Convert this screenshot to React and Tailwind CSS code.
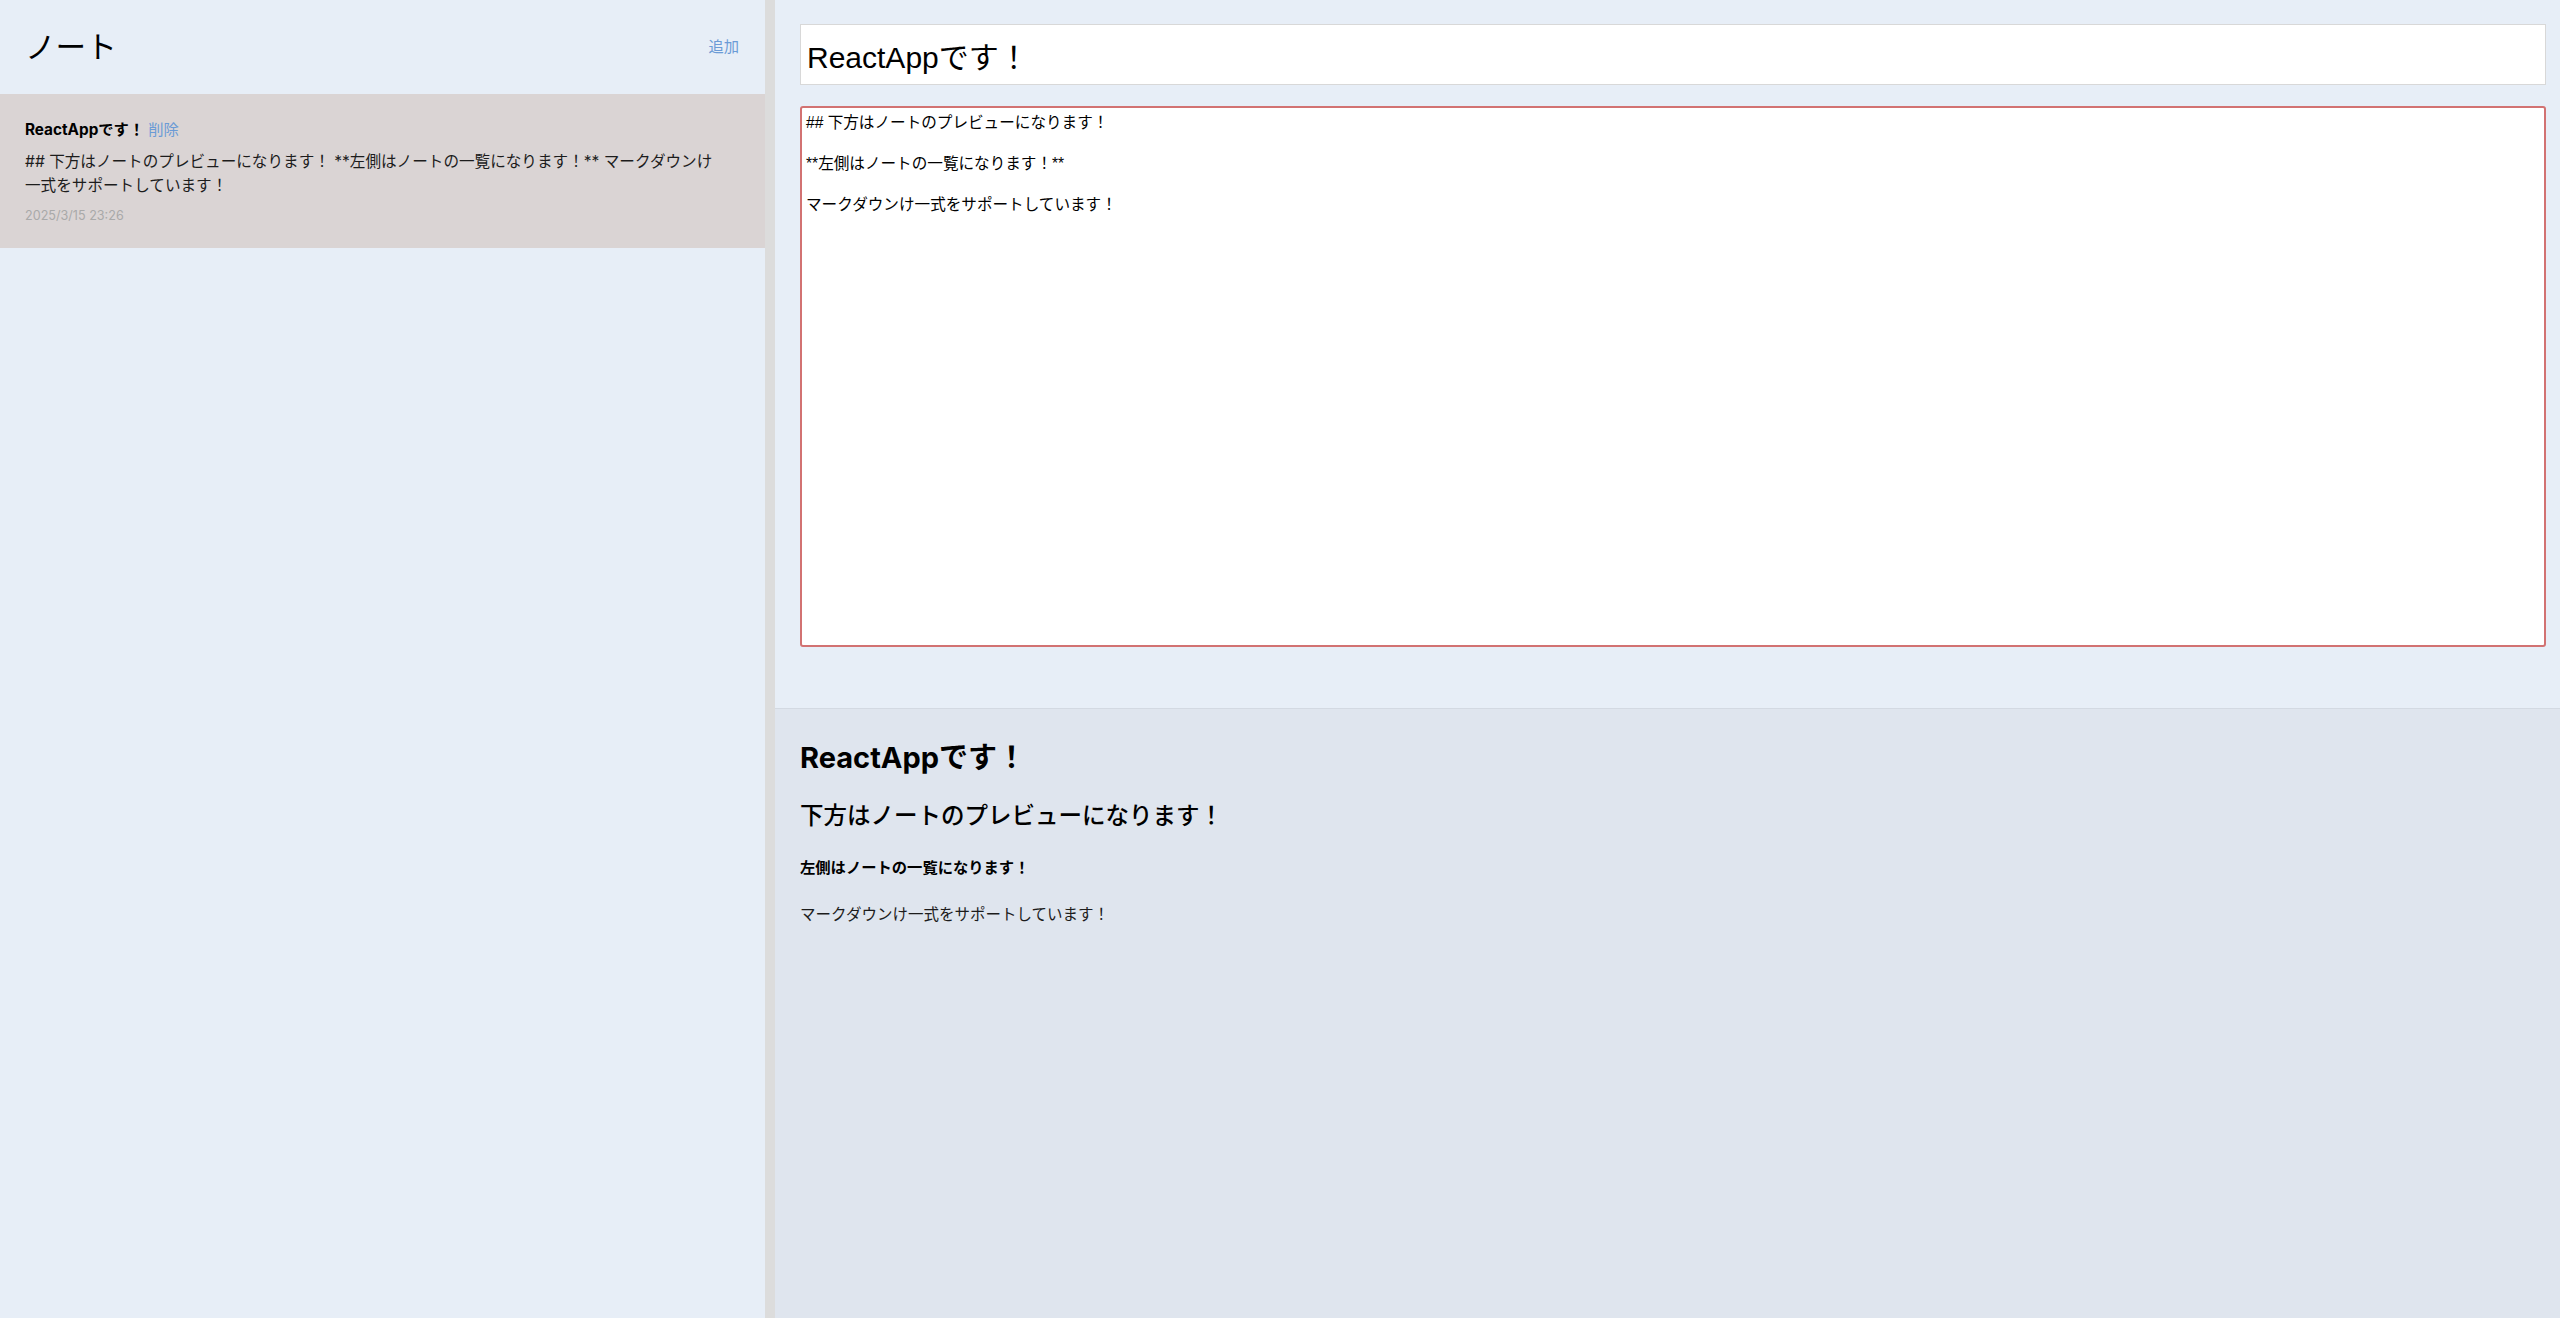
import React, { useState } from 'react';

const initialNote = {
  id: 1,
  title: 'ReactAppです！',
  content:
    '## 下方はノートのプレビューになります！\n\n**左側はノートの一覧になります！**\n\nマークダウンけ一式をサポートしています！',
  modDate: '2025/3/15 23:26',
};

const uiFont = "font-['Inter','Noto_Sans_CJK_JP',sans-serif]";

/**
 * Sidebar: note list with header and add button
 */
const Sidebar = ({ notes, activeId, onAdd, onDelete, onSelect }) => (
  <aside className={`w-[765px] shrink-0 bg-[#e7eef7] ${uiFont}`}>
    <div className="flex h-[94px] items-center justify-between pl-[25px] pr-[26px]">
      <h1 className="text-[30.6px] leading-[36px] font-normal text-black">ノート</h1>
      <button className="text-[15.3px] leading-[22px] text-[#6b9bd6]" onClick={onAdd}>
        追加
      </button>
    </div>

    <div>
      {notes.map((note) => (
        <div
          key={note.id}
          onClick={() => onSelect(note.id)}
          className={`px-[25px] pt-[25px] pb-[23px] cursor-pointer ${
            note.id === activeId ? 'bg-[#dad4d4]' : ''
          }`}
        >
          <div className="flex items-center gap-[4px] text-[15.3px] leading-[22px]">
            <strong className="font-bold text-black">{note.title}</strong>
            <button
              className="text-[#6b9bd6]"
              onClick={(e) => {
                e.stopPropagation();
                onDelete(note.id);
              }}
            >
              削除
            </button>
          </div>
          <p className="mt-[9px] w-[695px] text-[15.6px] leading-[24px] text-[#1c1c1c] [line-break:loose]">
            {note.content.replace(/\n+/g, ' ')}
          </p>
          <small className="mt-[9px] block text-[12.6px] leading-[18px] text-[#a9a9a9]">
            {note.modDate}
          </small>
        </div>
      ))}
    </div>
  </aside>
);

/**
 * Very small markdown renderer for the preview
 */
const Preview = ({ title, content }) => {
  const blocks = content.split(/\n\n+/);
  return (
    <div className={`flex-1 bg-[#dfe5ee] pl-[25px] pt-[32px] ${uiFont}`}>
      <h1 className="text-[29px] leading-[34px] font-bold text-black">{title}</h1>
      {blocks.map((b, i) => {
        if (b.startsWith('## ')) {
          return (
            <h2 key={i} className="mt-[26px] text-[23.5px] leading-[30px] font-medium text-black">
              {b.slice(3)}
            </h2>
          );
        }
        if (b.startsWith('**') && b.endsWith('**')) {
          return (
            <p key={i} className="mt-[26px] text-[15.3px] leading-[22px] font-bold text-black">
              {b.slice(2, -2)}
            </p>
          );
        }
        return (
          <p key={i} className="mt-[25px] text-[15.5px] leading-[22px] text-[#1c1c1c]">
            {b}
          </p>
        );
      })}
    </div>
  );
};

export default function App() {
  const [notes, setNotes] = useState([initialNote]);
  const [activeId, setActiveId] = useState(1);
  const active = notes.find((n) => n.id === activeId);

  const updateNote = (field, value) => {
    setNotes(notes.map((n) => (n.id === activeId ? { ...n, [field]: value } : n)));
  };

  const addNote = () => {
    const n = { id: Date.now(), title: '新しいノート', content: '', modDate: '' };
    setNotes([...notes, n]);
    setActiveId(n.id);
  };

  const deleteNote = (id) => setNotes(notes.filter((n) => n.id !== id));

  return (
    <div className="flex h-screen w-full overflow-hidden bg-[#e7eef7]">
      <Sidebar
        notes={notes}
        activeId={activeId}
        onAdd={addNote}
        onDelete={deleteNote}
        onSelect={setActiveId}
      />
      <div className="w-[10px] shrink-0 bg-[#dcdcdc]" />

      {active ? (
        <main className="flex min-w-0 flex-1 flex-col">
          {/* Editor */}
          <div className="h-[709px] shrink-0 border-b border-[#d3d9e2] bg-[#e7eef7] pl-[25px] pr-[14px] pt-[24px]">
            <input
              type="text"
              value={active.title}
              onChange={(e) => updateNote('title', e.target.value)}
              className="block h-[61px] w-full border border-[#d8d8d8] bg-white px-[6px] text-[30px] text-black outline-none font-['Liberation_Sans','Noto_Sans_CJK_JP',sans-serif]"
            />
            <textarea
              value={active.content}
              onChange={(e) => updateNote('content', e.target.value)}
              className="mt-[21px] block h-[541px] w-full resize-none rounded-[3px] border-2 border-[#d27272] bg-white px-[4px] pt-[5px] text-[15.6px] leading-[20.4px] text-black outline-none font-['Liberation_Sans','Noto_Sans_CJK_JP',sans-serif]"
            />
          </div>

          {/* Preview */}
          <Preview title={active.title} content={active.content} />
        </main>
      ) : (
        <div className="flex-1" />
      )}
    </div>
  );
}
